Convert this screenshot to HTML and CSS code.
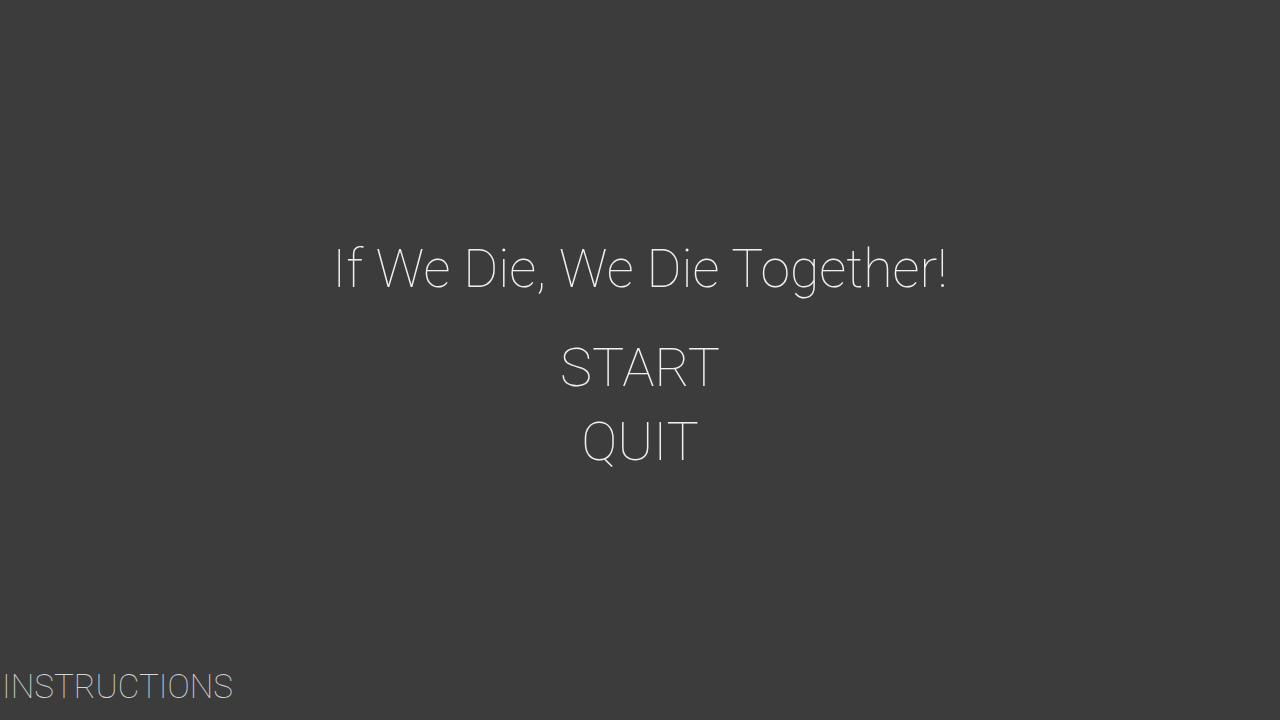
FILE: index.html
```html
<!DOCTYPE html>
<html lang="en">
<head>
    <meta charset="UTF-8">
    <meta name="viewport" content="width=device-width, initial-scale=1.0">
    <title>If We Die, We Die Together!</title>
    <link rel="stylesheet" href="styles.css">
</head>
<body>
    <div class="menu">
        <h1 class="title">If We Die, We Die Together!</h1>
        <a class="menu-button" href="#start">START</a>
        <a class="menu-button" href="#quit">QUIT</a>
    </div>
    <div class="footer">
        <a class="instructions" href="#instructions">INSTRUCTIONS</a>
    </div>
</body>
</html>
```

FILE: styles.css
```css
body {
    font-family: Roboto, "Liberation Sans", sans-serif;
    font-weight: 100;
    margin: 0;
    min-height: 100vh;
    display: flex;
    flex-direction: column;
    background-color: #3c3c3c;
    color: #f0f0f0;
}
a {
    color: inherit;
    text-decoration: none;
}
.menu {
    flex: 1;
    display: flex;
    flex-direction: column;
    align-items: center;
    justify-content: center;
    padding-top: 43px;
}
.title {
    font-size: 53.5px;
    font-weight: 100;
    line-height: 74px;
    margin: 0 0 25px 0;
}
.menu-button {
    font-size: 54px;
    line-height: 74px;
}
.footer {
    padding: 0 0 13px 2px;
}
.instructions {
    display: block;
    font-size: 33.3px;
    line-height: 40px;
    color: #d4d4d4;
}
```
